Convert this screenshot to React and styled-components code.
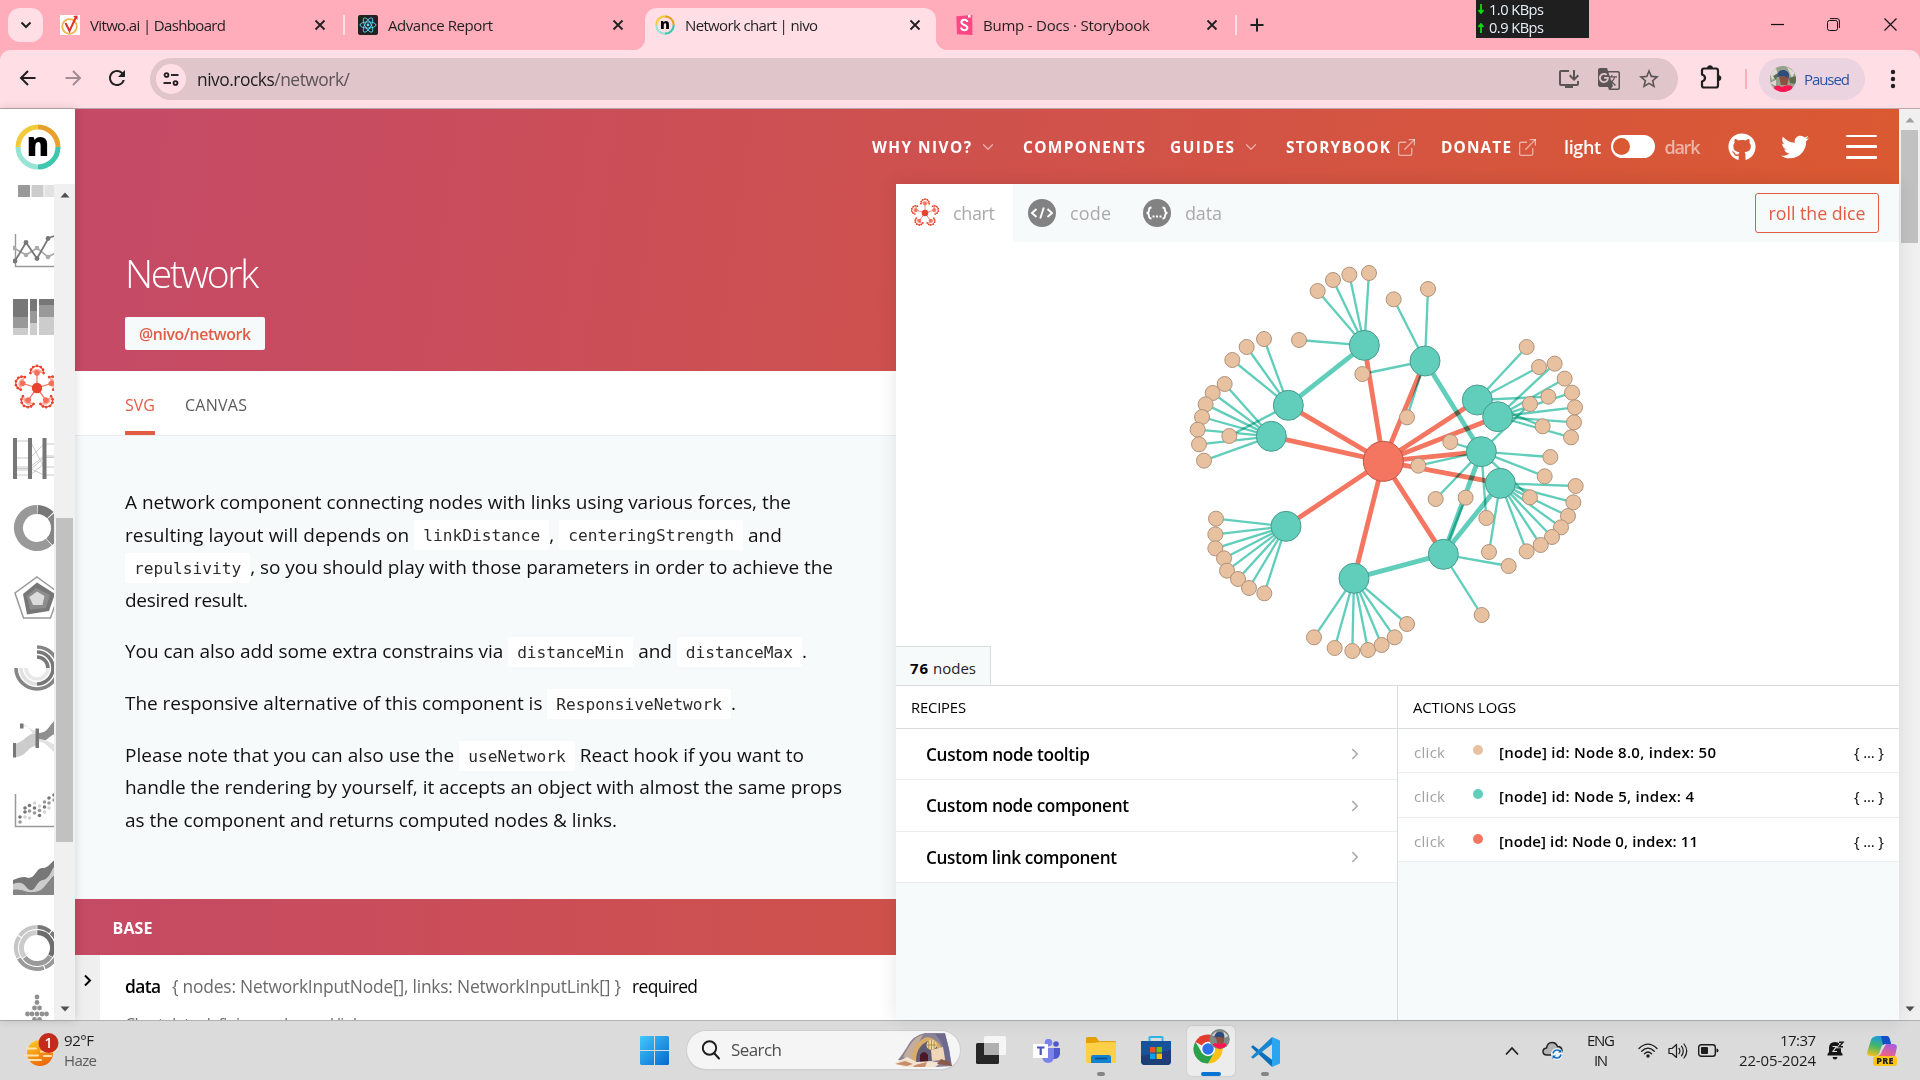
import React, { useLayoutEffect, useRef, useState } from "react";
import styled, { createGlobalStyle } from "styled-components";
import { FaGithub, FaTwitter } from "react-icons/fa";
import { FiExternalLink, FiChevronDown, FiChevronRight } from "react-icons/fi";
import { MdInstallDesktop, MdGTranslate, MdStarBorder, MdRefresh } from "react-icons/md";

const GlobalStyle = createGlobalStyle`
  * { box-sizing: border-box; }
  body { margin: 0; overflow: hidden; background: #fff; font-family: "Open Sans", "Noto Sans", sans-serif; }
  svg { display: block; flex: none; }
  p { margin: 0; }
`;

/* ---------- text that spreads its letters over a given width ---------- */
const Text = styled.span`
  display: inline-block;
  flex: none;
  white-space: nowrap;
  font-size: ${(p) => p.$size || 14}px;
  font-weight: ${(p) => p.$weight || 400};
  color: ${(p) => p.$color || "#000"};
`;

function Label({ width, children, ...rest }) {
  const ref = useRef(null);
  const [spacing, setSpacing] = useState(0);
  useLayoutEffect(() => {
    const el = ref.current;
    const count = Math.max(1, el.textContent.length);
    let next = 0;
    for (let i = 0; i < 8; i += 1) {
      el.style.letterSpacing = next + "px";
      next += (width + next - el.getBoundingClientRect().width) / count;
    }
    el.style.letterSpacing = next + "px";
    setSpacing(next);
  }, [width]);
  return (
    <Text ref={ref} style={{ letterSpacing: spacing, marginRight: -spacing }} {...rest}>
      {children}
    </Text>
  );
}

/* ---------- browser chrome ---------- */
const Screen = styled.div`
  width: 1920px;
  height: 1080px;
  display: flex;
  flex-direction: column;
  overflow: hidden;
`;

const TabStrip = styled.div`
  height: 50px;
  flex: none;
  display: flex;
  background: #ffadbb;
`;

const TabSearch = styled.div`
  width: 35px;
  height: 34px;
  margin: 8px 6px 0 8px;
  border-radius: 12px;
  background: #ffdfe5;
  display: flex;
  align-items: center;
  justify-content: center;
`;

const Tab = styled.div`
  width: ${(p) => p.$width}px;
  height: 50px;
  flex: none;
  padding: 0 ${(p) => p.$right || 9}px 0 ${(p) => p.$left || 10}px;
  display: flex;
  align-items: center;
  gap: 10px;
`;

const ActiveTab = styled(Tab)`
  height: 42px;
  margin-top: 8px;
  padding-bottom: 8px;
  background: #ffdfe5;
  border-radius: 12px 12px 0 0;
  position: relative;
  &::before, &::after {
    content: "";
    position: absolute;
    bottom: 0;
    width: 12px;
    height: 12px;
  }
  &::before { left: -12px; background: radial-gradient(circle at 0 0, #ffadbb 12px, #ffdfe5 12.5px); }
  &::after { right: -12px; background: radial-gradient(circle at 100% 0, #ffadbb 12px, #ffdfe5 12.5px); }
`;

const Spring = styled.div`flex: 1;`;

const TabRule = styled.div`
  width: 2px;
  height: 20px;
  margin: 15px ${(p) => p.$right || 0}px 0 0;
  background: #ffdfe5;
  flex: none;
`;

const NewTab = styled.div`
  width: 24px;
  margin-left: 8px;
  display: flex;
  align-items: center;
  justify-content: center;
`;

const SpeedMeter = styled.div`
  width: 113px;
  height: 38px;
  margin-left: 207px;
  padding-left: 1px;
  background: #1f1f1f;
  display: flex;
  flex-direction: column;
`;

const SpeedRow = styled.div`
  height: 18.5px;
  line-height: 17px;
  display: flex;
  align-items: center;
  gap: 4px;
`;

const WindowButtons = styled.div`
  display: flex;
  align-items: center;
  gap: 43px;
  margin-left: 182px;
  height: 48px;
`;

const ToolbarBack = styled.div`
  background: #ffadbb;
  height: 59px;
  flex: none;
`;

const Toolbar = styled.div`
  height: 59px;
  border-radius: 10px 10px 0 0;
  background: #ffdfe5;
  border-bottom: 1px solid #bda5ab;
  display: flex;
  align-items: center;
  padding-left: 18px;
`;

const NavButtons = styled.div`
  display: flex;
  gap: 25px;
  width: 132px;
`;

const Omnibox = styled.div`
  width: 1528px;
  height: 42px;
  border-radius: 21px;
  background: #e0c5ca;
  display: flex;
  align-items: center;
  padding: 0 17px 0 6px;
`;

const SiteInfo = styled.div`
  width: 30px;
  height: 30px;
  border-radius: 50%;
  background: #ffdfe5;
  margin-right: 11px;
  display: flex;
  align-items: center;
  justify-content: center;
`;

const OmniIcons = styled.div`
  display: flex;
  gap: 16px;
  color: #5c5558;
`;

const ToolRule = styled.div`
  width: 2px;
  height: 20px;
  background: #ffadbb;
  margin: 0 12px 0 20px;
`;

const ProfileChip = styled.div`
  width: 106px;
  height: 42px;
  border-radius: 21px;
  background: #ecd3e0;
  display: flex;
  align-items: center;
  gap: 8px;
  padding-left: 11px;
  margin-right: 22px;
`;

/* ---------- page frame ---------- */
const Page = styled.div`
  height: 911px;
  flex: none;
  display: flex;
`;

const Sidebar = styled.div`
  width: 75px;
  flex: none;
  background: #fff;
  display: flex;
  flex-direction: column;
  position: relative;
  z-index: 2;
  box-shadow: 0 0 9px rgba(0, 0, 0, 0.16);
`;

const LogoBox = styled.div`
  height: 75px;
  flex: none;
  display: flex;
  align-items: center;
  justify-content: center;
`;

const NavList = styled.div`
  flex: 1;
  min-height: 0;
  display: flex;
`;

const NavIcons = styled.div`
  width: 54px;
  padding-left: 13px;
  overflow: hidden;
`;

const NavItem = styled.div`
  height: ${(p) => p.$height || 70}px;
  display: flex;
  align-items: ${(p) => (p.$height ? "flex-end" : "center")};
  padding-bottom: ${(p) => (p.$height ? 11 : 0)}px;
`;

const ScrollTrack = styled.div`
  width: 21px;
  flex: none;
  background: #f0f0f0;
  display: flex;
  flex-direction: column;
  align-items: center;
  justify-content: space-between;
  padding: ${(p) => p.$pad || "8px 0"};
`;

const ScrollThumb = styled.div`
  width: 17px;
  height: ${(p) => p.$height}px;
  background: #c1c1c1;
  margin: ${(p) => p.$top}px 0 auto;
`;

const Main = styled.div`
  width: 1824px;
  flex: none;
  display: flex;
  flex-direction: column;
  background: linear-gradient(98deg, #c54a65 4%, #dc5a2e 100%);
`;

const Header = styled.header`
  height: 75px;
  flex: none;
  display: flex;
  align-items: center;
  padding: 1px 22px 0 797px;
`;

const NavLink = styled.div`
  display: flex;
  align-items: center;
  gap: ${(p) => p.$gap || 10}px;
  margin-right: ${(p) => p.$right}px;
  color: rgba(255, 255, 255, 0.55);
`;

const Switch = styled.div`
  width: 45px;
  height: 23px;
  border-radius: 12px;
  background: #fff;
  margin: 0 9px 1px 10px;
  padding: 3px 3px 3px 2px;
  &::before {
    content: "";
    display: block;
    width: 17px;
    height: 17px;
    border-radius: 50%;
    background: #da5932;
  }
`;

const SocialIcons = styled.div`
  display: flex;
  align-items: center;
  gap: 25px;
  margin: 0 37px 1px 28px;
  color: #fff;
`;

const Burger = styled.div`
  width: 31px;
  height: 24px;
  margin-bottom: 1px;
  display: flex;
  flex-direction: column;
  justify-content: space-between;
  span { height: 2.6px; background: #fff; border-radius: 1px; }
`;

const Columns = styled.div`
  flex: 1;
  min-height: 0;
  display: flex;
`;

const Left = styled.div`
  width: 821px;
  flex: none;
  display: flex;
  flex-direction: column;
  overflow: hidden;
`;

const Hero = styled.div`
  height: 187px;
  flex: none;
  padding: 61px 0 0 50px;
  display: flex;
  flex-direction: column;
  align-items: flex-start;
`;

const Title = styled.div`
  height: 56px;
  line-height: 56px;
`;

const PackageBadge = styled.div`
  width: 140px;
  height: 33px;
  margin-top: 16px;
  border-radius: 2px;
  background: #f6fafb;
  display: flex;
  align-items: center;
  justify-content: center;
`;

const Variants = styled.div`
  height: 65px;
  flex: none;
  background: #fff;
  border-bottom: 1px solid #e9edee;
  padding-left: 50px;
  display: flex;
  gap: 30px;
`;

const Variant = styled.div`
  height: 64px;
  display: flex;
  align-items: center;
  padding-top: ${(p) => (p.$active ? 7 : 3)}px;
  border-bottom: ${(p) => (p.$active ? "4px solid #e25c44" : "none")};
`;

const Description = styled.div`
  height: 463px;
  flex: none;
  background: #f6fafb;
  padding: 50px 0 0 50px;
`;

const Para = styled.div`margin-bottom: 19.2px;`;

const Line = styled.div`
  height: 32.55px;
  line-height: 32.55px;
`;

const Code = styled.code`
  display: inline-block;
  height: 30px;
  line-height: 32px;
  vertical-align: middle;
  padding: 0 9px;
  background: #fff;
  border-radius: 2px;
  font-family: "DejaVu Sans Mono", monospace;
  font-size: 16.2px;
  letter-spacing: 0;
  color: #2c2c2c;
  margin: -2px 0 0;
`;

const GroupHeader = styled.div`
  height: 56px;
  flex: none;
  background: linear-gradient(90deg, #c54a64 0, #dc5a2e 1824px);
  display: flex;
  align-items: center;
  padding: 2px 0 0 37.5px;
`;

const PropRow = styled.div`
  flex: 1;
  min-height: 0;
  display: flex;
  background: #fff;
  overflow: hidden;
`;

const Gutter = styled.div`
  width: 25px;
  background: #efefef;
  padding: 17px 0 0 7.5px;
`;

const PropBody = styled.div`
  padding: 14px 0 0 25px;
  display: flex;
  flex-direction: column;
`;

const PropLine = styled.div`
  height: 33px;
  flex: none;
  display: flex;
  align-items: center;
  gap: 11px;
`;

const Hint = styled.div`
  height: 24px;
  flex: none;
  margin-top: 11px;
`;

/* ---------- right panel ---------- */
const Right = styled.div`
  width: 1003px;
  flex: none;
  display: flex;
  flex-direction: column;
  position: relative;
  z-index: 1;
  box-shadow: 0 0 18px rgba(0, 0, 0, 0.1);
  background: #f6fafb;
`;

const ViewTabs = styled.div`
  height: 58px;
  flex: none;
  display: flex;
  align-items: center;
  padding-right: 20px;
`;

const ViewTab = styled.div`
  width: ${(p) => p.$width}px;
  height: 58px;
  padding-left: ${(p) => (p.$active ? 14 : 15)}px;
  display: flex;
  align-items: center;
  gap: ${(p) => (p.$active ? 13 : 14)}px;
  background: ${(p) => (p.$active ? "#fff" : "transparent")};
`;

const DiceButton = styled.div`
  width: 124px;
  height: 40px;
  margin-left: auto;
  border: 1px solid #e25c44;
  border-radius: 3px;
  display: flex;
  align-items: center;
  justify-content: center;
`;

const ChartArea = styled.div`
  height: 444px;
  flex: none;
  background: #fff;
  border-bottom: 1px solid #d9dcdd;
  position: relative;
`;

const NodeCount = styled.div`
  position: absolute;
  left: 0;
  bottom: 0;
  width: 95px;
  height: 39px;
  background: #f6fafb;
  border: 1px solid #d9dcdd;
  border-width: 1px 1px 0 0;
  display: flex;
  align-items: center;
  gap: 5px;
  padding: 3px 0 0 14px;
`;

const Panels = styled.div`
  flex: 1;
  display: flex;
`;

const Panel = styled.div`
  width: ${(p) => p.$width}px;
  border-left: ${(p) => (p.$ruled ? "1px solid #d9dcdd" : "none")};
`;

const PanelTitle = styled.div`
  height: 43px;
  padding: 0 0 1px 15px;
  background: #fff;
  border-bottom: 1px solid #d9dcdd;
  display: flex;
  align-items: center;
`;

const Recipe = styled.div`
  height: ${(p) => p.$height}px;
  padding: 0 33px 0 30px;
  background: #fff;
  border-bottom: 1px solid #e9edee;
  display: flex;
  align-items: center;
  justify-content: space-between;
`;

const LogRow = styled.div`
  height: ${(p) => p.$height}px;
  padding: 2px 15px 0 16px;
  background: #fff;
  border-bottom: 1px solid #e9edee;
  display: flex;
  align-items: center;
`;

const Dot = styled.div`
  width: 10px;
  height: 10px;
  border-radius: 50%;
  margin: 0 16px 4px 28px;
  background: ${(p) => p.$color};
`;

/* ---------- taskbar ---------- */
const Taskbar = styled.div`
  height: 60px;
  flex: none;
  background: #dbdbdb;
  border-top: 1px solid #b1b3b3;
  display: flex;
  align-items: center;
`;

const Weather = styled.div`
  width: 640px;
  padding-left: 24px;
  display: flex;
  align-items: center;
  gap: 4px;
`;

const Stack = styled.div`
  display: flex;
  flex-direction: column;
  align-items: ${(p) => p.$align || "flex-start"};
  line-height: 20px;
  padding-bottom: 2px;
`;

const SearchBox = styled.div`
  width: 273px;
  height: 38px;
  margin: 0 16px 2px 18px;
  border-radius: 19px;
  background: #f5f5f5;
  box-shadow: 0 0 0 1px #cfcfcf, 0 1px 1px #aaa;
  display: flex;
  align-items: center;
  padding: 0 8px 0 13px;
  gap: 10px;
`;

const App48 = styled.div`
  width: ${(p) => p.$width || 54}px;
  height: 50px;
  padding-top: ${(p) => (p.$running ? 11 : 0)}px;
  display: flex;
  flex-direction: column;
  align-items: center;
  justify-content: ${(p) => (p.$running ? "space-between" : "center")};
`;

const AppChrome = styled(App48)`
  background: #ececec;
  border-radius: 5px;
  box-shadow: 0 0 0 1px #d0d0d0;
  padding-top: 2px;
`;

const RunMark = styled.div`
  width: ${(p) => (p.$active ? 20 : 8)}px;
  height: 4px;
  flex: none;
  border-radius: 2px;
  background: ${(p) => (p.$active ? "#0a74d4" : "#858585")};
`;

const Tray = styled.div`
  margin-left: auto;
  display: flex;
  align-items: center;
  padding-right: 23px;
`;

const TrayGap = styled.div`
  width: ${(p) => p.$width}px;
  flex: none;
`;

/* ---------- small drawings ---------- */
const Close = ({ r = 5.5 }) => (
  <svg width="12" height="12" viewBox="-6 -6 12 12">
    <path d={`M${-r + 1} ${-r + 1}L${r - 1} ${r - 1}M${r - 1} ${-r + 1}L${-r + 1} ${r - 1}`} stroke="#1f1f1f" strokeWidth="1.8" />
  </svg>
);

const NivoLogo = ({ size }) => (
  <svg width={size} height={size} viewBox="0 0 46 46">
    <g fill="none" strokeWidth="5">
      <path d="M23 3A20 20 0 0 1 43 23" stroke="#e8a02c" />
      <path d="M43 23A20 20 0 0 1 23 43" stroke="#3cc7ae" />
      <path d="M23 43A20 20 0 0 1 3 23" stroke="#97e3d5" />
      <path d="M3 23A20 20 0 0 1 23 3" stroke="#f1cb3a" />
    </g>
    <text x="23" y="31.5" fontSize="34" fontWeight="800" textAnchor="middle" fontFamily="Open Sans, sans-serif">n</text>
  </svg>
);

const Vitwo = () => (
  <svg width="20" height="20" viewBox="0 0 20 20">
    <rect width="20" height="20" fill="#fff" />
    <circle cx="9.5" cy="11.5" r="7.3" fill="none" stroke="#f3b24c" strokeWidth="1.8" />
    <path d="M5.5 8L9.5 16L16 2" fill="none" stroke="#e0302c" strokeWidth="2" />
    <path d="M13 1L17.500 .5L17.500 5Z" fill="#e0302c" />
  </svg>
);

const ReactMark = () => (
  <svg width="20" height="20" viewBox="-10 -10 20 20">
    <rect x="-10" y="-10" width="20" height="20" rx="2" fill="#222" />
    <g fill="none" stroke="#5ed3f3" strokeWidth="0.9">
      <ellipse rx="8" ry="3.1" />
      <ellipse rx="8" ry="3.1" transform="rotate(60)" />
      <ellipse rx="8" ry="3.1" transform="rotate(120)" />
    </g>
    <circle r="1.4" fill="#5ed3f3" />
  </svg>
);

const StorybookMark = () => (
  <svg width="17" height="20" viewBox="0 0 17 20">
    <path d="M0.300 1.200L16.200 0L16.500 20L1 19.200Z" fill="#ff4785" />
    <path d="M12 0L14.500 0V3L13.200 2L12 3Z" fill="#fff" />
    <path d="M11.300 7C11.300 3.800 5.400 4 5.400 7.200C5.400 10.500 11.400 9.500 11.400 12.800C11.400 16 5.200 16 5.200 12.600" fill="none" stroke="#fff" strokeWidth="2" />
  </svg>
);

const Puzzle = () => (
  <svg width="24" height="26" viewBox="0 0 24 26">
    <path d="M3 6.500Q3 4.500 5 4.500H17Q19 4.500 19 6.500V21.500Q19 23.500 17 23.500H5Q3 23.500 3 21.500V17.500Q6 16.500 6 14T3 10.500Z" fill="none" stroke="#1f1f1f" strokeWidth="2.200" strokeLinejoin="round" />
    <path d="M8 4Q8.500 1.200 11 1.200T14 4ZM19.500 11Q22.300 11.500 22.300 14T19.500 17Z" fill="#1f1f1f" />
  </svg>
);

const Avatar = ({ size }) => (
  <svg width={size} height={size} viewBox="0 0 26 26">
    <clipPath id={`av${size}`}><circle cx="13" cy="13" r="13" /></clipPath>
    <g clipPath={`url(#av${size})`}>
      <rect width="26" height="26" fill="#98a08e" />
      <path d="M0 6L6 2L8 9L2 14ZM17 1L25 6L22 12ZM0 17L6 14V20Z" fill="#dcd9d2" />
      <path d="M3 10L8 7L6 14ZM19 12L26 10V18L20 17Z" fill="#5d6a4c" />
      <path d="M9 11Q13 8 19 12L17 19L11 19Z" fill="#8d5142" />
      <path d="M7 11Q8 3 14 4Q20 5 19 12L13 10Z" fill="#2e4c7c" />
      <path d="M2 26L5 20Q9 19 12 21Q17 18 22 20L24 26Z" fill="#ff1552" />
    </g>
  </svg>
);

const Arrow = ({ up, color = "#505050" }) => (
  <svg width="10" height="6" viewBox="0 0 10 6">
    <path d={up ? "M5 0.500L9.500 5.500H0.500Z" : "M5 5.500L0.500 0.500H9.500Z"} fill={color} />
  </svg>
);

const SPOKES = [-90, -18, 54, 126, 198];
const FAN = [-95, -65, -35, 0, 35, 65, 95];
const NetworkGlyph = ({ size }) => (
  <svg width={size} height={size} viewBox="-24 -24 48 48">
    {SPOKES.map((a) => (
      <g key={a} transform={`rotate(${a})`}>
        <path d="M0 0H15" stroke="#f4796a" strokeWidth="1.3" />
        <path d="M14 0L15.500 -5.500A6 6 0 0 1 15.500 5.500Z" fill="#fba79b" />
        <circle cx="15" cy="0" r="2.800" fill="#f96e5a" />
        <path d="M15.500 -6.500A6.500 6.500 0 0 1 15.500 6.500" fill="none" stroke="#f0543f" strokeWidth="1.200" />
        {FAN.map((b) => (
          <circle key={b} cx={15.5 + 6.6 * Math.cos((b * Math.PI) / 180)} cy={6.6 * Math.sin((b * Math.PI) / 180)} r="1.400" fill="#e8432e" />
        ))}
      </g>
    ))}
    <circle r="5.200" fill="#e8432e" />
  </svg>
);

const Glyph = ({ children }) => (
  <svg width="48" height="48" viewBox="0 0 48 48">{children}</svg>
);

const D = "#777";
const M = "#999";
const L = "#ccc";
const polar = (r, deg) => [24 + r * Math.sin((deg * Math.PI) / 180), 24 - r * Math.cos((deg * Math.PI) / 180)];
const arc = (r, a, b) => {
  const [x1, y1] = polar(r, a);
  const [x2, y2] = polar(r, b);
  return `M${x1} ${y1}A${r} ${r} 0 ${b - a > 180 ? 1 : 0} 1 ${x2} ${y2}`;
};
const Ring = ({ r, from, to, w, c }) => <path d={arc(r, from, to)} fill="none" stroke={c} strokeWidth={w} />;

const Waffle = () => (
  <Glyph>
    <rect x="5" y="31" width="12" height="12" fill={M} />
    <rect x="18.500" y="31" width="12" height="12" fill={L} />
    <rect x="31.500" y="31" width="12" height="12" fill="#e2e2e2" />
  </Glyph>
);
const LineGlyph = () => (
  <Glyph>
    <path d="M2.500 10V42.500H48" fill="none" stroke={M} strokeWidth="1.4" />
    <path d="M1 24L13 31L24 24L35 33L46 27" fill="none" stroke="#aaa" strokeWidth="1.8" />
    {[[1, 24], [13, 31], [24, 24], [35, 33]].map(([x, y]) => <circle key={x} cx={x} cy={y} r="2.300" fill="#aaa" />)}
    <path d="M2 37L13 18.500L24 34.500L35 15Q38 12 46 11.500" fill="none" stroke={D} strokeWidth="1.800" />
    {[[2, 37], [13, 18.5], [24, 34.5], [35, 14.5]].map(([x, y]) => <circle key={x} cx={x} cy={y} r="2.400" fill={D} />)}
  </Glyph>
);
const Marimekko = () => (
  <Glyph>
    <path d="M0 5H15V23H0ZM17 5H24V17H17ZM26 5H48V11H26Z" fill={D} />
    <path d="M0 23H15V34.500H0ZM17 17H24V29H17ZM26 11H48V23H26Z" fill={M} />
    <path d="M0 34.500H15V41H0ZM17 29H24V41H17ZM26 23H48V41H26Z" fill={L} />
  </Glyph>
);
const Parallel = () => (
  <Glyph>
    <path d="M2 7H17L31 33H48M2 24H17L31 10H48M2 33H17L31 22H48M2 34.500H17L31 41H48M2 36H17L31 23.500H48M2 41H17L31 30" fill="none" stroke="#c9c9c9" strokeWidth="1" />
    <path d="M0 4H4V45H0ZM15 4H19V45H15ZM29.500 4H33.500V45H29.500Z" fill={D} />
  </Glyph>
);
const Pie = () => (
  <Glyph>
    <Ring r={18.5} from={140} to={360} w={9} c={M} />
    <Ring r={18.5} from={2} to={46} w={9} c={D} />
    <Ring r={18.5} from={49} to={138} w={9} c="#858585" />
  </Glyph>
);
const Radar = () => (
  <Glyph>
    <path d="M24 3L46 19L37.500 44H10.500L2 19Z" fill="none" stroke={M} strokeWidth="1.500" />
    <path d="M24 8.500L42 20L36 37L14 40.500L10 20Z" fill={D} />
    <path d="M23 14L37 21L33 34L17 35.500L14 22Z" fill="#8d8d8d" />
    <path d="M24 17.500L31.500 22L29.500 31H20L16.500 23Z" fill="#dcdcdc" />
  </Glyph>
);
const Radial = () => (
  <Glyph>
    <Ring r={21} from={0} to={270} w={3.6} c="#858585" />
    <Ring r={16} from={180} to={270} w={3.6} c="#e0e0e0" />
    <Ring r={16} from={0} to={180} w={3.6} c={D} />
    <Ring r={11} from={90} to={270} w={3.6} c="#e8e8e8" />
    <Ring r={11} from={0} to={90} w={3.6} c={D} />
  </Glyph>
);
const Sankey = () => (
  <Glyph>
    <path d="M2 30C14 26 14 19 24 19V32C14 32 14 43 2 43Z" fill={L} />
    <path d="M8 10C18 10 16 21 24 20V17C18 17 18 12 8 12Z" fill="#e2e2e2" />
    <path d="M26 19C38 19 36 5 48 5V19C36 19 36 28 26 28Z" fill="#8f8f8f" />
    <path d="M26 28C36 28 36 39 48 40V33C38 30 36 26 26 25Z" fill="#e2e2e2" />
    <path d="M0 29H3V43.500H0ZM7 9.500H10.500V14.500H7ZM22.500 14.500H26V34H22.500Z" fill={D} />
  </Glyph>
);
const DOTS = [[7, 33], [7, 38, 1], [12, 24], [12, 28], [12, 33, 2], [16.500, 21.500], [16.500, 27, 1], [16.500, 34, 2], [21.500, 19, 2], [21.500, 24], [21.500, 29, 1], [26.500, 22, 2], [26.500, 26.500, 1], [26.500, 31.500], [31.500, 18, 1], [31.500, 23], [31.500, 28, 2], [36, 14], [36, 19, 1], [36, 24, 2], [41, 11], [41, 16, 1]];
const Scatter = () => (
  <Glyph>
    <path d="M2.500 10V42.500H48" fill="none" stroke={M} strokeWidth="1.500" />
    {DOTS.map(([x, y, t], i) => <circle key={i} cx={x} cy={y} r="1.800" fill={[D, M, "#d4d4d4"][t || 0]} />)}
  </Glyph>
);
const Stream = () => (
  <Glyph>
    <path d="M0 26Q11 21 15 24C23 24 23 14 29 14C38 14 37 5 48 4V41H0Z" fill={D} />
    <path d="M0 30Q9 26 14 34C22 42 23 26 30 26C38 24 38 14 44 10V20C36 23 32 38 22 38C13 40 11 35 0 36Z" fill={L} />
    <path d="M0 36C11 35 13 40 22 38C32 38 36 23 44 20V41H0Z" fill="#858585" />
  </Glyph>
);
const Sunburst = () => (
  <Glyph>
    <Ring r={21} from={1} to={39} w={4} c={D} />
    <Ring r={21} from={42} to={120} w={4} c={D} />
    <Ring r={15.5} from={1} to={120} w={5} c="#6c6c6c" />
    <Ring r={21} from={122} to={158} w={4} c={M} />
    <Ring r={21} from={161} to={240} w={4} c={M} />
    <Ring r={15.5} from={122} to={232} w={5} c={M} />
    <Ring r={21} from={243} to={302} w={4} c="#c6c6c6" />
    <Ring r={21} from={305} to={359} w={4} c="#c6c6c6" />
    <Ring r={15.500} from={235} to={359} w={5} c={L} />
  </Glyph>
);
const SWARM = [[0, 0], [0, 5.5], [-2.5, 11], [2.5, 11], [-9.500, 17], [-5, 17], [0, 17], [5, 17], [9.500, 17], [-2.5, 22.5], [2.5, 22.5], [0, 28]];
const Swarm = () => (
  <Glyph>
    {SWARM.map(([x, y], i) => <circle key={i} cx={24 + x} cy={3 + y} r="2.400" fill="#909090" />)}
  </Glyph>
);

/* ---------- network chart data, in thirds of a pixel ---------- */
const ROOT = [640, 664];
const HUBS = {
  a: [583, 316], b: [765, 363], c: [355, 496], d: [304, 589], e: [348, 859],
  f: [552, 1015], g: [820, 943], h: [922, 480], i: [983, 530], j: [934, 635], k: [991, 730],
};
const CROSS = ["ac", "bj", "jg", "kg", "fg"];
const LEAVES = {
  a: [[443, 153], [489, 120], [538, 104], [597, 99], [387, 300]],
  b: [[671, 178], [774, 147], [577, 402], [711, 532]],
  c: [[187, 360], [230, 321], [282, 297], [178, 588]],
  d: [[164, 432], [128, 459], [107, 493], [96, 531], [83, 569], [87, 613], [102, 662]],
  e: [[138, 836], [136, 883], [136, 925], [162, 955], [171, 992], [204, 1017], [237, 1044], [283, 1060]],
  f: [[432, 1192], [494, 1224], [547, 1233], [594, 1230], [635, 1215], [674, 1192], [711, 1152]],
  g: [[1016, 978], [935, 1125], [887, 773]],
  h: [[1070, 321], [1107, 381], [1135, 470], [1118, 559]],
  i: [[1154, 371], [1184, 416], [1206, 458], [1215, 502], [1212, 547], [1203, 592]],
  j: [[1080, 492], [1141, 651], [1124, 709], [841, 606], [745, 677], [797, 777], [949, 834], [1080, 772]],
  k: [[1217, 738], [1210, 787], [1194, 828], [1173, 862], [1146, 891], [1112, 915], [1070, 934], [957, 936]],
};

const NetworkChart = () => (
  <svg width="1003" height="443" viewBox="-822 6 3009 1329">
    <g style={{ isolation: "isolate" }}>
      {Object.entries(HUBS).map(([k, [x, y]]) => (
        <line key={k} x1={ROOT[0]} y1={ROOT[1]} x2={x} y2={y} stroke="#f47560" strokeWidth="14.5" style={{ mixBlendMode: "multiply" }} />
      ))}
      {CROSS.map((p) => {
        const [s, t] = [HUBS[p[0]], HUBS[p[1]]];
        return <line key={p} x1={s[0]} y1={s[1]} x2={t[0]} y2={t[1]} stroke="#61cdbb" strokeWidth="14.5" style={{ mixBlendMode: "multiply" }} />;
      })}
      {Object.entries(LEAVES).flatMap(([k, list]) =>
        list.map(([x, y]) => (
          <line key={k + x + y} x1={HUBS[k][0]} y1={HUBS[k][1]} x2={x} y2={y} stroke="#61cdbb" strokeWidth="7" style={{ mixBlendMode: "multiply" }} />
        ))
      )}
    </g>
    <circle cx={ROOT[0]} cy={ROOT[1]} r="60" fill="#f47560" stroke="#b95949" strokeWidth="3" />
    {Object.entries(HUBS).map(([k, [x, y]]) => (
      <circle key={k} cx={x} cy={y} r="45" fill="#61cdbb" stroke="#4a9c8e" strokeWidth="3" />
    ))}
    {Object.entries(LEAVES).flatMap(([k, list]) =>
      list.map(([x, y]) => <circle key={k + x + y} cx={x} cy={y} r="22.500" fill="#e8c1a0" stroke="#b0937a" strokeWidth="3" />)
    )}
  </svg>
);

const RoundIcon = ({ children }) => (
  <svg width="28" height="28" viewBox="0 0 28 28">
    <circle cx="14" cy="14" r="14" fill="#828282" />
    {children}
  </svg>
);

/* ---------- taskbar drawings ---------- */
const HazeIcon = () => (
  <svg width="36" height="36" viewBox="0 0 36 36">
    <defs>
      <linearGradient id="haze" x1="0" y1="0" x2="0.500" y2="1">
        <stop offset="0" stopColor="#fdd020" />
        <stop offset="1" stopColor="#ee6a0c" />
      </linearGradient>
    </defs>
    <circle cx="16" cy="20" r="13" fill="url(#haze)" />
    <path d="M3 15.500H12M17 18.500H30M1 22.500H14M20 23H27M5 27H17" stroke="#fbe3b0" strokeWidth="2" strokeLinecap="round" />
    <circle cx="24.500" cy="10" r="10" fill="#c42b1c" />
    <text x="24.500" y="15" fontSize="14" fontWeight="600" fill="#fff" textAnchor="middle" fontFamily="Open Sans, sans-serif">1</text>
  </svg>
);

const WindowsLogo = () => (
  <svg width="29" height="29" viewBox="0 0 29 29">
    <defs>
      <linearGradient id="win" x1="0" y1="0" x2="1" y2="1">
        <stop offset="0" stopColor="#43c8fb" />
        <stop offset="1" stopColor="#0568cf" />
      </linearGradient>
    </defs>
    <path d="M0 1A1 1 0 0 1 1 0H14V14H0ZM15 0H28L29 1V14H15ZM0 15H14V29H1L0 28ZM15 15H29V28L28 29H15Z" fill="url(#win)" />
  </svg>
);

const Bridge = () => (
  <svg width="57" height="34" viewBox="0 0 57 34">
    <path d="M3 27Q7 22 12 14Q18 2 30 0H50L54 16L57 33L42 34Z" fill="#8b8496" />
    <path d="M8 24Q13 14 18 8Q22 3 28 2L20 16L17 27Z" fill="#c4ad9c" />
    <path d="M40 1H50L54 16L56 30L50 28Q50 10 40 1Z" fill="#6d6a8e" />
    <path d="M17 28Q17 9 32 4Q48 7 50 28Z" fill="#d9ac69" />
    <path d="M21 29Q21 13 33 8Q45 12 47 28Z" fill="#625c74" />
    <path d="M36 17L48 14L50 27L37 28Z" fill="#f0d5b6" />
    <circle cx="36.500" cy="12" r="5" fill="#f1dca2" />
    <path d="M32 12H41M36.500 7V17M33.800 8V16M39.200 8V16" stroke="#a37e3d" strokeWidth="0.800" />
    <path d="M25 30V22Q29 16 33 22V30Z" fill="#4a1726" />
    <path d="M0 30L12 24L22 29L36 28L46 30L40 34H8Z" fill="#f3e4d2" />
    <path d="M0 31L10 28L18 31L12 33ZM20 32L32 29L30 34H18Z" fill="#c88e6b" />
    <path d="M46 26L55 29L57 33L42 31Z" fill="#8b5a4b" />
  </svg>
);

const TaskView = () => (
  <svg width="30" height="29" viewBox="0 0 30 29">
    <rect x="0" y="7" width="23" height="21" rx="1.500" fill="#262626" />
    <rect x="8" y="0" width="22" height="19" rx="1.500" fill="#f6f6f6" />
    <path d="M8 7H23V19H8Z" fill="#b0b0b0" />
  </svg>
);

const Teams = () => (
  <svg width="27" height="24" viewBox="0 0 27 24">
    <circle cx="23" cy="5" r="2.800" fill="#5059c9" />
    <circle cx="15.500" cy="3.600" r="3.800" fill="#7b83eb" />
    <path d="M17 9H27V15Q26 20 21 20H17Z" fill="#5059c9" />
    <path d="M9 9H21V17Q21 24 15 24Q9.500 24 9 17Z" fill="#7b83eb" />
    <rect x="0" y="5" width="15" height="14" rx="0.500" fill="#fff" />
    <path d="M4 8.500H11.500M7.700 8.500V16" stroke="#4b53bc" strokeWidth="2.200" fill="none" />
  </svg>
);

const Folder = () => (
  <svg width="30" height="27" viewBox="0 0 30 27">
    <path d="M0 1.500Q0 0 1.500 0H10L13 4H29Q30 4 30 6V12H0Z" fill="#e3a008" />
    <path d="M0 6Q12 6 13 5H29Q30 5 30 6.500V25Q30 26 29 26H1Q0 26 0 25Z" fill="#ffcf48" />
    <path d="M5 26V20Q5 18 7 18H23Q25 18 25 20V26Z" fill="#1581cf" />
    <path d="M9 21.500H21" stroke="#0a4b8c" strokeWidth="1.500" />
  </svg>
);

const Store = () => (
  <svg width="30" height="29" viewBox="0 0 30 29">
    <path d="M8.500 5V1.500Q8.500 1 9.500 1H20.500Q21.500 1 21.500 1.500V5" fill="none" stroke="#2fb4ea" strokeWidth="2" />
    <path d="M0 5H30V25Q30 29 26 29H4Q0 29 0 25Z" fill="#17539b" />
    <path d="M0 20L30 14V25Q30 29 26 29H4Q0 29 0 25Z" fill="#1c3f77" />
    <path d="M9 11H14.500V16.500H9Z" fill="#f25022" />
    <path d="M15.500 11H21V16.500H15.500Z" fill="#7fba00" />
    <path d="M9 17.500H14.500V23H9Z" fill="#00a4ef" />
    <path d="M15.500 17.500H21V23H15.500Z" fill="#ffb900" />
  </svg>
);

const Chrome = () => (
  <svg width="38" height="38" viewBox="-16 -21 38 38">
    <path d="M0 0L-12.600 -7.250A14.500 14.500 0 0 1 12.600 -7.250Z" fill="#e33b2e" />
    <path d="M0 -7.250H12.600A14.500 14.500 0 0 1 0 14.500L6.300 3.600Z" fill="#fbc116" />
    <path d="M-12.600 -7.250A14.500 14.500 0 0 0 0 14.500L6.300 3.600L-6.300 3.600Z" fill="#2aa148" />
    <circle r="7.200" fill="#fff" />
    <circle r="5.700" fill="#2a74e8" />
    <g transform="translate(1.500 -20) scale(0.780)">
      <circle cx="13" cy="13" r="13" fill="#7e8a86" />
      <path d="M3 8L9 3L8 10ZM18 3L24 9L19 12Z" fill="#d9d6d0" />
      <path d="M8 10Q13 7 19 12L18 19L10 19Z" fill="#8d5142" />
      <path d="M6 11Q7 3 14 4Q20 5 19 12L13 10Z" fill="#2e4c7c" />
      <path d="M4 20L7 18Q13 20 20 18L22 21Q13 30 4 20Z" fill="#ff1552" />
    </g>
  </svg>
);

const VSCode = () => (
  <svg width="30" height="30" viewBox="0 0 30 30">
    <path d="M1 10L3 8.300L23 23.500V29L21.500 29.500Z" fill="#0a6fb8" />
    <path d="M1 20L3 21.700L23 6.500V1L21.500 0.500Z" fill="#1a86cf" />
    <path d="M22 0L30 3.500V26.500L22 30Q21 29 22 28Z" fill="#2aa5f2" />
  </svg>
);

const CloudSync = () => (
  <svg width="22" height="19" viewBox="0 0 22 19">
    <path d="M5 14Q1 14 1 10.500Q1 7.500 4.500 7Q5.500 1.500 10 1.500Q14 1.500 15.500 5.500Q20 5.500 20 10V14Z" fill="#b4b4b4" stroke="#222" strokeWidth="1.500" />
    <circle cx="15" cy="13" r="6" fill="#f4f4f4" />
    <path d="M11 12.500A4.200 4.200 0 0 1 18.500 10.700M19 13.500A4.200 4.200 0 0 1 11.500 15.300" fill="none" stroke="#0a6fc8" strokeWidth="1.500" />
    <path d="M19.500 8V11.500H16ZM10.500 18V14.500H14Z" fill="#0a6fc8" />
  </svg>
);

const Wifi = () => (
  <svg width="20" height="16" viewBox="0 0 20 16">
    <g fill="none" stroke="#1c1c1c" strokeWidth="1.300" strokeLinecap="round">
      <path d="M1 5.500Q10 -3.200 19 5.500" />
      <path d="M3.700 8.200Q10 2 16.300 8.200" />
      <path d="M6.300 10.900Q10 7.200 13.700 10.900" />
    </g>
    <circle cx="10" cy="13" r="1.700" fill="#1c1c1c" />
  </svg>
);

const Speaker = () => (
  <svg width="20" height="18" viewBox="0 0 20 18">
    <g fill="none" stroke="#1c1c1c" strokeWidth="1.200" strokeLinecap="round" strokeLinejoin="round">
      <path d="M1 6.500H4L8.500 2.500V15.500L4 11.500H1Z" />
      <path d="M11 6.300Q12.800 9 11 11.700M13.500 4.200Q17 9 13.500 13.800M16 2Q21.500 9 16 16" />
    </g>
  </svg>
);

const Battery = () => (
  <svg width="21" height="13" viewBox="0 0 21 13">
    <rect x="0.700" y="0.700" width="16.600" height="11.600" rx="2.500" fill="none" stroke="#1c1c1c" strokeWidth="1.400" />
    <rect x="3" y="3" width="7" height="7" rx="1" fill="#1c1c1c" />
    <path d="M18.500 4.500Q20.500 4.500 20.500 6.500T18.500 8.500Z" fill="#1c1c1c" />
  </svg>
);

const Bell = () => (
  <svg width="18" height="20" viewBox="0 0 18 20">
    <path d="M0.500 14.500V13L2 11V7Q2 1 8 1Q14 1 14 7V11L15.500 13V14.500Z" fill="#161616" />
    <path d="M5.500 16H10.500Q10 18.500 8 18.500T5.500 16Z" fill="#161616" />
    <path d="M5.500 5.500H9.500L6 10.500H10" fill="none" stroke="#dbdbdb" strokeWidth="1.200" />
    <path d="M12 1.200H16L12 5.800H16" fill="none" stroke="#dbdbdb" strokeWidth="3" />
    <path d="M12 1.200H16L12 5.800H16" fill="none" stroke="#161616" strokeWidth="1.400" />
  </svg>
);

const Copilot = () => (
  <svg width="30" height="30" viewBox="0 0 30 30">
    <defs>
      <linearGradient id="cp1" x1="0.500" y1="0" x2="0.200" y2="1">
        <stop offset="0" stopColor="#1896e8" />
        <stop offset="0.500" stopColor="#45b66a" />
        <stop offset="1" stopColor="#f4c11a" />
      </linearGradient>
      <linearGradient id="cp2" x1="0.800" y1="0" x2="0.300" y2="1">
        <stop offset="0" stopColor="#a45be8" />
        <stop offset="1" stopColor="#f2637d" />
      </linearGradient>
    </defs>
    <path d="M7 1Q8 0 11 0H20Q22 0 23 4L24 8H18Q15 8 14 12L12 18Q11 20 8 20H4Q-1 20 0.500 15L4 4Q5 1 7 1Z" fill="url(#cp1)" />
    <path d="M14 0H20Q22 0 23 4L24 8H18L16 9Z" fill="#1350c8" />
    <path d="M19 8H26Q31 8 29.500 13L28 20H11Q14 19 15 15Z" fill="url(#cp2)" />
    <rect x="6" y="20" width="24" height="10" rx="3" fill="#fec518" />
    <text x="18" y="28.200" fontSize="9" fontWeight="800" textAnchor="middle" fill="#222" fontFamily="Open Sans, sans-serif" letterSpacing="0.300">PRE</text>
  </svg>
);

/* ---------- sections ---------- */
const BrowserTabs = () => (
  <TabStrip>
    <TabSearch>
      <svg width="12" height="8" viewBox="0 0 12 8"><path d="M1.500 1.500L6 6L10.500 1.500" fill="none" stroke="#1f1f1f" strokeWidth="2" /></svg>
    </TabSearch>
    <Tab $width={294} $left={11} $right={17}>
      <Vitwo />
      <Label width={136} $size={15} $color="#1f1f1f">Vitwo.ai | Dashboard</Label>
      <Spring />
      <Close />
    </Tab>
    <TabRule />
    <Tab $width={300} $left={13} $right={21}>
      <ReactMark />
      <Label width={105} $size={15} $color="#1f1f1f">Advance Report</Label>
      <Spring />
      <Close />
    </Tab>
    <ActiveTab $width={291} $right={15}>
      <NivoLogo size={20} />
      <Label width={133} $size={15} $color="#1f1f1f">Network chart | nivo</Label>
      <Spring />
      <Close />
    </ActiveTab>
    <Tab $width={299} $left={20} $right={17}>
      <StorybookMark />
      <Label width={167} $size={15} $color="#1f1f1f">Bump - Docs · Storybook</Label>
      <Spring />
      <Close />
    </Tab>
    <TabRule />
    <NewTab>
      <svg width="14" height="14" viewBox="0 0 14 14"><path d="M7 0.500V13.500M0.500 7H13.500" stroke="#1f1f1f" strokeWidth="2" /></svg>
    </NewTab>
    <SpeedMeter>
      <SpeedRow>
        <svg width="8" height="10" viewBox="0 0 8 10"><path d="M4 0V9M1.500 6L4 9L6.500 6" fill="none" stroke="#0be00b" strokeWidth="1.800" /></svg>
        <Label width={55} $size={14.6} $color="#e8f0fa">1.0 KBps</Label>
      </SpeedRow>
      <SpeedRow>
        <svg width="8" height="10" viewBox="0 0 8 10"><path d="M4 10V1M1.500 4L4 1L6.500 4" fill="none" stroke="#0be00b" strokeWidth="1.800" /></svg>
        <Label width={55} $size={14.6} $color="#e8f0fa">0.9 KBps</Label>
      </SpeedRow>
    </SpeedMeter>
    <WindowButtons>
      <svg width="13" height="13" viewBox="0 0 13 13"><path d="M0 6.500H13" stroke="#111" strokeWidth="1.200" /></svg>
      <svg width="13" height="13" viewBox="0 0 13 13"><rect x="0.500" y="2.500" width="10" height="10" rx="2" fill="none" stroke="#111" /><path d="M3 0.600H10Q12.400 0.600 12.400 3V10" fill="none" stroke="#111" /></svg>
      <svg width="13" height="13" viewBox="0 0 13 13" style={{ marginLeft: 1 }}><path d="M0.500 0.500L12.500 12.500M12.500 0.500L0.500 12.500" stroke="#111" strokeWidth="1.200" /></svg>
    </WindowButtons>
  </TabStrip>
);

const BrowserToolbar = () => (
  <ToolbarBack>
    <Toolbar>
      <NavButtons>
        <svg width="20" height="20" viewBox="0 0 20 20"><path d="M17.500 10H3.500M10 3L3 10L10 17" fill="none" stroke="#1f1f1f" strokeWidth="2" /></svg>
        <svg width="20" height="20" viewBox="0 0 20 20"><path d="M2.500 10H16.500M10 3L17 10L10 17" fill="none" stroke="#a18c91" strokeWidth="2" /></svg>
        <MdRefresh size={24} color="#1f1f1f" style={{ margin: "-2px 0 0 -3px" }} />
      </NavButtons>
      <Omnibox>
        <SiteInfo>
          <svg width="16" height="14" viewBox="0 0 16 14">
            <g fill="none" stroke="#1f1f1f" strokeWidth="1.900">
              <circle cx="3.500" cy="3" r="1.900" /><path d="M8 3H15.500" />
              <circle cx="12.500" cy="11" r="1.900" /><path d="M0.500 11H8" />
            </g>
          </svg>
        </SiteInfo>
        <Label width={153} $size={17.4} $color="#1f1f1f">nivo.rocks<Text as="span" $size={17.4} $color="#5c5356">/network/</Text></Label>
        <Spring />
        <OmniIcons>
          <MdInstallDesktop size={24} />
          <MdGTranslate size={24} />
          <MdStarBorder size={24} />
        </OmniIcons>
      </Omnibox>
      <div style={{ margin: "-4px 2px 0 21px" }}><Puzzle /></div>
      <ToolRule />
      <ProfileChip>
        <Avatar size={26} />
        <Label width={46} $size={15} $color="#2b52a0">Paused</Label>
      </ProfileChip>
      <svg width="12" height="22" viewBox="0 0 12 22"><g fill="#1f1f1f"><circle cx="6" cy="4" r="2.200" /><circle cx="6" cy="11" r="2.200" /><circle cx="6" cy="18" r="2.200" /></g></svg>
    </Toolbar>
  </ToolbarBack>
);

const SideNav = () => (
  <Sidebar>
    <LogoBox><NivoLogo size={46} /></LogoBox>
    <NavList>
      <NavIcons>
        <NavItem $height={29}><div><Waffle /></div></NavItem>
        <NavItem><LineGlyph /></NavItem>
        <NavItem><Marimekko /></NavItem>
        <NavItem><NetworkGlyph size={48} /></NavItem>
        <NavItem><Parallel /></NavItem>
        <NavItem><Pie /></NavItem>
        <NavItem><Radar /></NavItem>
        <NavItem><Radial /></NavItem>
        <NavItem><Sankey /></NavItem>
        <NavItem><Scatter /></NavItem>
        <NavItem><Stream /></NavItem>
        <NavItem><Sunburst /></NavItem>
        <NavItem><Swarm /></NavItem>
      </NavIcons>
      <ScrollTrack>
        <Arrow up />
        <ScrollThumb $top={320} $height={324} />
        <Arrow />
      </ScrollTrack>
    </NavList>
  </Sidebar>
);

const SiteHeader = () => (
  <Header>
    <NavLink $right={26} $gap={8}>
      <Label width={99} $size={15.4} $weight={700} $color="#fff">WHY NIVO?</Label>
      <FiChevronDown size={18} strokeWidth={1.6} />
    </NavLink>
    <NavLink $right={25}>
      <Label width={122} $size={15.4} $weight={700} $color="#fff">COMPONENTS</Label>
    </NavLink>
    <NavLink $right={26} $gap={8}>
      <Label width={64} $size={15.4} $weight={700} $color="#fff">GUIDES</Label>
      <FiChevronDown size={18} strokeWidth={1.6} />
    </NavLink>
    <NavLink $right={24} $gap={6}>
      <Label width={104} $size={15.4} $weight={700} $color="#fff">STORYBOOK</Label>
      <FiExternalLink size={21} strokeWidth={1.5} />
    </NavLink>
    <NavLink $right={26} $gap={6}>
      <Label width={70} $size={15.4} $weight={700} $color="#fff">DONATE</Label>
      <FiExternalLink size={21} strokeWidth={1.5} />
    </NavLink>
    <Label width={37} $size={18} $weight={600} $color="#fff">light</Label>
    <Switch />
    <Label width={36} $size={18} $weight={600} $color="rgba(255,255,255,.55)">dark</Label>
    <SocialIcons>
      <FaGithub size={28} />
      <FaTwitter size={28} />
    </SocialIcons>
    <Burger><span /><span /><span /></Burger>
  </Header>
);

const T = ({ w, children }) => (
  <Line><Label width={w} $size={19} $color="#111">{children}</Label></Line>
);

const Docs = () => (
  <Left>
    <Hero>
      <Title><Label width={134} $size={39} $weight={300} $color="#fff">Network</Label></Title>
      <PackageBadge><Label width={112} $size={15.8} $weight={600} $color="#e25c44">@nivo/network</Label></PackageBadge>
    </Hero>
    <Variants>
      <Variant $active><Label width={30} $size={16} $weight={500} $color="#e25c44">SVG</Label></Variant>
      <Variant><Label width={62} $size={16} $weight={500} $color="#5c5c5c">CANVAS</Label></Variant>
    </Variants>
    <Description>
      <Para>
        <T w={666}>A network component connecting nodes with links using various forces, the</T>
        <T w={657}>resulting layout will depends on <Code>linkDistance</Code>, <Code>centeringStrength</Code> and</T>
        <T w={708}><Code>repulsivity</Code>, so you should play with those parameters in order to achieve the</T>
        <T w={123}>desired result.</T>
      </Para>
      <Para>
        <T w={682}>You can also add some extra constrains via <Code>distanceMin</Code> and <Code>distanceMax</Code>.</T>
      </Para>
      <Para>
        <T w={611}>The responsive alternative of this component is <Code>ResponsiveNetwork</Code>.</T>
      </Para>
      <Para>
        <T w={679}>Please note that you can also use the <Code>useNetwork</Code> React hook if you want to</T>
        <T w={717}>handle the rendering by yourself, it accepts an object with almost the same props</T>
        <T w={492}>as the component and returns computed nodes &amp; links.</T>
      </Para>
    </Description>
    <GroupHeader><Label width={40} $size={16} $weight={700} $color="#fff">BASE</Label></GroupHeader>
    <PropRow>
      <Gutter>
        <svg width="10" height="16" viewBox="0 0 10 16"><path d="M2 3.500L7 8.500L2 13.500" fill="none" stroke="#000" strokeWidth="2" /></svg>
      </Gutter>
      <PropBody>
        <PropLine>
          <Label width={36} $size={17.4} $weight={600}>data</Label>
          <Label width={449} $size={17.4} $color="#6a6a6a">{"{ nodes: NetworkInputNode[], links: NetworkInputLink[] }"}</Label>
          <Label width={66} $size={17.4}>required</Label>
        </PropLine>
        <Hint><Label width={247} $size={16} $color="#6a6a6a">Chart data defining nodes and links.</Label></Hint>
      </PropBody>
    </PropRow>
  </Left>
);

const RECIPES = [["Custom node tooltip", 164, 51], ["Custom node component", 203, 52], ["Custom link component", 191, 51]];
const LOGS = [
  ["#e8c1a0", "[node] id: Node 8.0, index: 50", 217, 44],
  ["#61cdbb", "[node] id: Node 5, index: 4", 195, 45],
  ["#f47560", "[node] id: Node 0, index: 11", 199, 44],
];

const Playground = () => (
  <Right>
    <ViewTabs>
      <ViewTab $active $width={117}>
        <NetworkGlyph size={30} />
        <Label width={42} $size={18} $color="#aaa">chart</Label>
      </ViewTab>
      <ViewTab $width={115}>
        <RoundIcon><path d="M8.500 10L4 14L8.500 18M19.500 10L24 14L19.500 18M15.800 8.500L12.200 19.500" fill="none" stroke="#fff" strokeWidth="1.900" /></RoundIcon>
        <Label width={41} $size={18} $color="#aaa">code</Label>
      </ViewTab>
      <ViewTab $width={115}>
        <RoundIcon>
          <path d="M8.500 8.500Q6 8.500 6 11Q6 14 3.500 14Q6 14 6 17Q6 19.500 8.500 19.500M19.500 8.500Q22 8.500 22 11Q22 14 24.500 14Q22 14 22 17Q22 19.500 19.500 19.500" fill="none" stroke="#fff" strokeWidth="1.800" />
          <path d="M9.500 17.500H11.500M13 17.500H15M16.500 17.500H18.500" stroke="#fff" strokeWidth="1.900" />
        </RoundIcon>
        <Label width={37} $size={18} $color="#aaa">data</Label>
      </ViewTab>
      <DiceButton><Label width={97} $size={17.8} $weight={500} $color="#e25c44">roll the dice</Label></DiceButton>
    </ViewTabs>
    <ChartArea>
      <NetworkChart />
      <NodeCount>
        <Label width={18} $size={15} $weight={700}>76</Label>
        <Label width={43} $size={15} $color="#222">nodes</Label>
      </NodeCount>
    </ChartArea>
    <Panels>
      <Panel $width={501}>
        <PanelTitle><Label width={55} $size={14.8}>RECIPES</Label></PanelTitle>
        {RECIPES.map(([name, w, h]) => (
          <Recipe key={name} $height={h}>
            <Label width={w} $size={17.2} $weight={600}>{name}</Label>
            <FiChevronRight size={18} color="#a5a5a5" />
          </Recipe>
        ))}
      </Panel>
      <Panel $width={502} $ruled>
        <PanelTitle><Label width={103} $size={14.8}>ACTIONS LOGS</Label></PanelTitle>
        {LOGS.map(([color, text, w, h]) => (
          <LogRow key={text} $height={h}>
            <Label width={31} $size={15} $color="#a2a2a2">click</Label>
            <Dot $color={color} />
            <Label width={w} $size={15} $weight={600}>{text}</Label>
            <Spring />
            <Label width={30} $size={15}>{"{ ... }"}</Label>
          </LogRow>
        ))}
      </Panel>
    </Panels>
  </Right>
);

const WindowsBar = () => (
  <Taskbar>
    <Weather>
      <HazeIcon />
      <Stack>
        <Label width={30} $size={15} $color="#1c1c1c">92°F</Label>
        <Label width={33} $size={15} $color="#5a5a5a">Haze</Label>
      </Stack>
    </Weather>
    <WindowsLogo />
    <SearchBox>
      <svg width="21" height="21" viewBox="0 0 21 21"><circle cx="9.500" cy="9" r="6.700" fill="none" stroke="#1c1c1c" strokeWidth="1.900" /><path d="M14 14L19 19.500" stroke="#1c1c1c" strokeWidth="2" strokeLinecap="round" /></svg>
      <Label width={51} $size={17} $color="#4e4e4e">Search</Label>
      <Spring />
      <Bridge />
    </SearchBox>
    <TaskView />
    <TrayGap $width={27} />
    <Teams />
    <TrayGap $width={14} />
    <App48 $running $width={54}><Folder /><RunMark /></App48>
    <App48 $width={55}><Store /></App48>
    <TrayGap $width={4} />
    <AppChrome $running $width={48}><Chrome /><RunMark $active /></AppChrome>
    <TrayGap $width={3} />
    <App48 $running $width={54}><VSCode /><RunMark /></App48>
    <Tray>
      <svg width="14" height="10" viewBox="0 0 14 10"><path d="M1 8.500L7 2L13 8.500" fill="none" stroke="#1c1c1c" strokeWidth="1.700" /></svg>
      <TrayGap $width={23} />
      <CloudSync />
      <TrayGap $width={23} />
      <Stack $align="center">
        <Label width={28} $size={15} $color="#1c1c1c">ENG</Label>
        <Label width={14} $size={15} $color="#1c1c1c">IN</Label>
      </Stack>
      <TrayGap $width={23} />
      <Wifi />
      <TrayGap $width={10} />
      <Speaker />
      <TrayGap $width={10} />
      <Battery />
      <TrayGap $width={20} />
      <Stack $align="flex-end">
        <Label width={36} $size={15} $color="#1c1c1c">17:37</Label>
        <Label width={77} $size={15} $color="#1c1c1c">22-05-2024</Label>
      </Stack>
      <TrayGap $width={11} />
      <Bell />
      <TrayGap $width={22} />
      <Copilot />
    </Tray>
  </Taskbar>
);

export default function App() {
  return (
    <Screen>
      <GlobalStyle />
      <BrowserTabs />
      <BrowserToolbar />
      <Page>
        <SideNav />
        <Main>
          <SiteHeader />
          <Columns>
            <Docs />
            <Playground />
          </Columns>
        </Main>
        <ScrollTrack>
          <Arrow up color="#a0a0a0" />
          <ScrollThumb $top={7} $height={113} />
          <Arrow />
        </ScrollTrack>
      </Page>
      <WindowsBar />
    </Screen>
  );
}
